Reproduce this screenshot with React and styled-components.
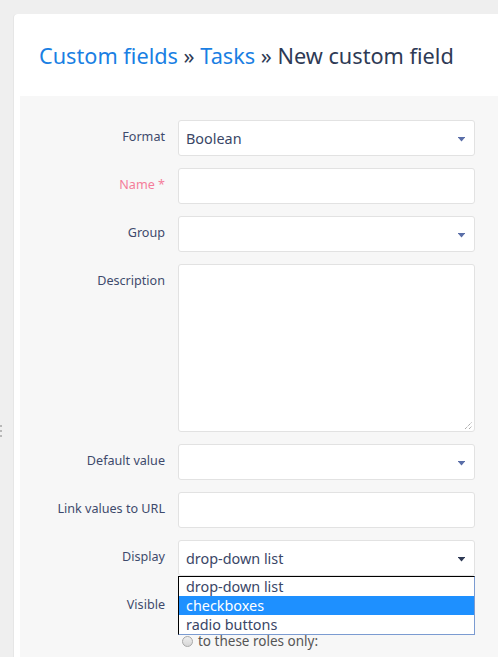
import React from "react";
import styled, { createGlobalStyle } from "styled-components";

const Global = createGlobalStyle`
  html, body { margin: 0; padding: 0; }
  body {
    background: #efefef;
    font-family: "Noto Sans", "Open Sans", sans-serif;
    width: 498px;
    height: 657px;
    overflow: hidden;
  }
`;

const Page = styled.div`
  display: flex;
  height: 657px;
  padding-top: 14px;
  box-sizing: border-box;
`;

const Sidebar = styled.div`
  width: 14px;
  flex: none;
  display: flex;
  flex-direction: column;
  padding-top: 411px;
  box-sizing: border-box;
`;

const Handle = styled.div`
  display: flex;
  flex-direction: column;
  gap: 3px;
`;

const Dot = styled.span`
  display: block;
  width: 2px;
  height: 2px;
  background: #b8b8b8;
`;

const Card = styled.div`
  flex: 1;
  background: #fff;
  border-radius: 4px 0 0 0;
  box-shadow: -1px 0 0 #e6e6e6;
  padding: 0 0 0 6px;
  display: flex;
  flex-direction: column;
  min-width: 0;
`;

const Title = styled.h2`
  margin: 0;
  padding: 27px 0 0 19px;
  height: 82px;
  box-sizing: border-box;
  font-size: 21.7px;
  font-weight: 400;
  line-height: 30px;
  color: #2e3a55;
  white-space: nowrap;
`;

const Crumb = styled.a`
  color: #1a7fe3;
  text-decoration: none;
`;

const Form = styled.div`
  flex: 1;
  background: #f7f7f7;
  padding-top: 24px;
  display: grid;
  grid-template-columns: 145px 297px;
  column-gap: 13px;
  row-gap: 12px;
  align-content: start;
`;

const Label = styled.label`
  text-align: right;
  font-size: 12.6px;
  line-height: 18px;
  padding-top: 8px;
  color: ${(p) => (p.$required ? "#f47d9a" : "#3e4a6c")};
  white-space: nowrap;
`;

const Field = styled.div`
  position: relative;
  height: ${(p) => p.$h || 36}px;
  box-sizing: border-box;
  background: #fff;
  border: 1px solid #e2e2e2;
  border-radius: 3px;
  display: flex;
  align-items: center;
  padding: 0 8px 0 7px;
  font-size: 14.4px;
  color: #3a4666;
`;

const Value = styled.span`
  flex: 1;
  white-space: nowrap;
`;

const Caret = styled.svg`
  flex: none;
  width: 7px;
  height: 5px;
  margin: 2px 1px 0 0;
`;

const Resize = styled.svg`
  position: absolute;
  right: 1px;
  bottom: 1px;
  width: 10px;
  height: 10px;
`;

const List = styled.ul`
  position: absolute;
  left: -1px;
  right: -1px;
  top: 35px;
  margin: 0;
  padding: 0;
  list-style: none;
  background: #fff;
  border: 1px solid #7b9bd1;
  border-top-color: #000;
  border-left-color: #000;
  z-index: 2;
`;

const Option = styled.li`
  height: 19px;
  line-height: 19px;
  padding-left: 7px;
  font-size: 14.4px;
  color: ${(p) => (p.$active ? "#fff" : "#3a4666")};
  background: ${(p) => (p.$active ? "#1e90ff" : "transparent")};
`;

const Radios = styled.div`
  display: flex;
  flex-direction: column;
  gap: 14px;
  padding: 12px 0 0 4px;
  font-size: 13.5px;
  color: #555;
`;

const RadioLine = styled.div`
  display: flex;
  align-items: center;
  gap: 5px;
  height: 18px;
`;

const RadioDot = styled.span`
  width: 11px;
  height: 11px;
  border-radius: 50%;
  border: 1px solid #a8a8a8;
  background: linear-gradient(#eee, #d6d6d6);
  box-sizing: border-box;
`;

const CaretIcon = ({ dark }) => (
  <Caret viewBox="0 0 7 5">
    <rect x="0" y="0" width="7" height="1" fill={dark ? "#2f3a55" : "#5a6ea8"} />
    <polygon points="0.5,1 6.5,1 3.5,4.5" fill={dark ? "#2f3a55" : "#5a6ea8"} />
  </Caret>
);

export default function App() {
  return (
    <>
      <Global />
      <Page>
        <Sidebar>
          <Handle>
            <Dot />
            <Dot />
            <Dot />
          </Handle>
        </Sidebar>
        <Card>
          <Title>
            <Crumb>Custom fields</Crumb> » <Crumb>Tasks</Crumb> » New custom field
          </Title>
          <Form>
            <Label>Format</Label>
            <Field>
              <Value>Boolean</Value>
              <CaretIcon />
            </Field>

            <Label $required>Name *</Label>
            <Field />

            <Label>Group</Label>
            <Field>
              <Value />
              <CaretIcon />
            </Field>

            <Label>Description</Label>
            <Field $h={168}>
              <Resize viewBox="0 0 10 10">
                <line x1="2" y1="9" x2="9" y2="2" stroke="#666" strokeWidth="0.8" strokeDasharray="1 1" />
                <line x1="6" y1="9" x2="9" y2="6" stroke="#666" strokeWidth="0.8" strokeDasharray="1 1" />
              </Resize>
            </Field>

            <Label>Default value</Label>
            <Field>
              <Value />
              <CaretIcon />
            </Field>

            <Label>Link values to URL</Label>
            <Field />

            <Label>Display</Label>
            <Field>
              <Value>drop-down list</Value>
              <CaretIcon dark />
              <List>
                <Option>drop-down list</Option>
                <Option $active>checkboxes</Option>
                <Option>radio buttons</Option>
              </List>
            </Field>

            <Label>Visible</Label>
            <Radios>
              <RadioLine>
                <RadioDot />
              </RadioLine>
              <RadioLine>
                <RadioDot />
                to these roles only:
              </RadioLine>
            </Radios>
          </Form>
        </Card>
      </Page>
    </>
  );
}
